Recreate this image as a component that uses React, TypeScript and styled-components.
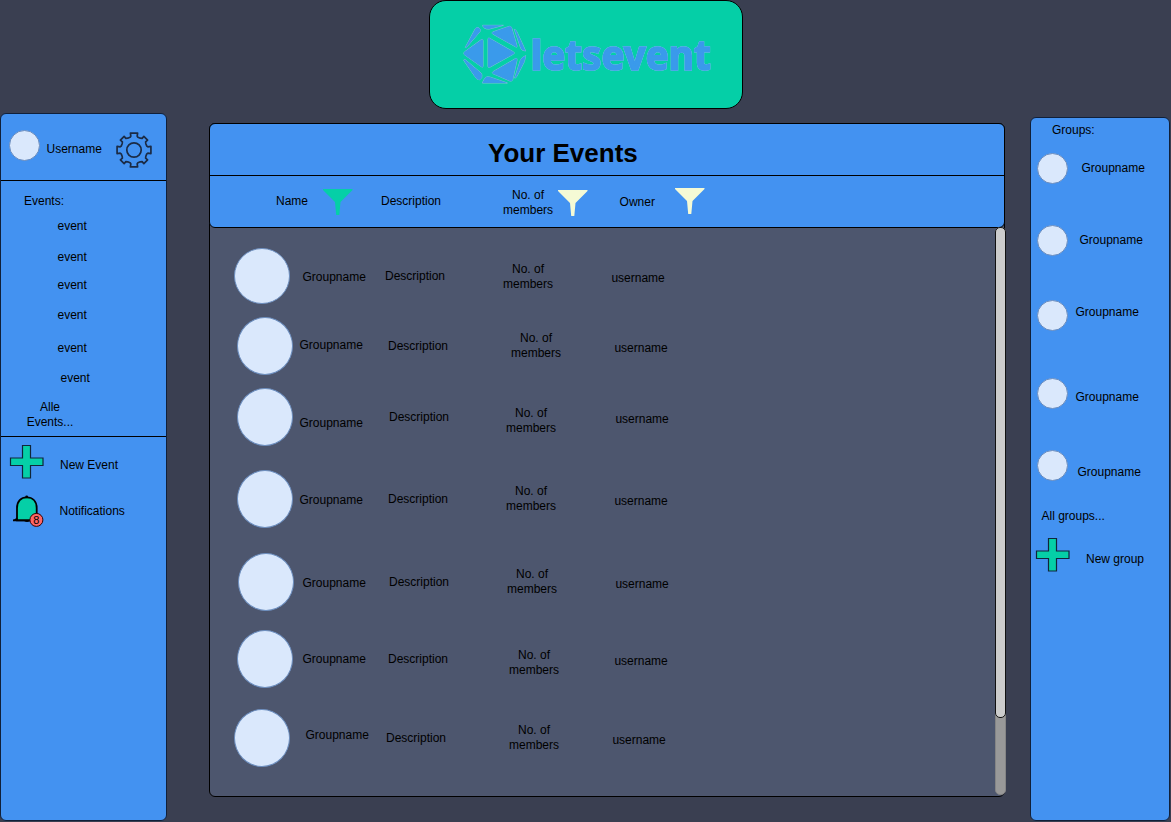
import React from "react";
import styled, { createGlobalStyle } from "styled-components";

const colors = {
  page: "#3a3f51",
  blue: "#4392f1",
  green: "#05cfa7",
  body: "#4d566e",
  avatar: "#dae8fc",
  avatarLine: "#6c8ebf",
  cream: "#f5fad5",
};

const GlobalStyle = createGlobalStyle`
  * { box-sizing: border-box; }
  body { margin: 0; background: ${colors.page}; overflow: hidden; }
`;

const Page = styled.div`
  display: flex;
  flex-direction: column;
  width: 1171px;
  height: 822px;
  background: ${colors.page};
  font: 12px/15px "Liberation Sans", Arial, sans-serif;
  color: #000;
`;

const Header = styled.header`
  display: flex;
  justify-content: center;
  height: 109px;
`;

const LogoCard = styled.div`
  width: 314px;
  height: 109px;
  background: ${colors.green};
  border: 1px solid #000;
  border-radius: 17px;
  svg { display: block; }
`;

const Main = styled.main`
  display: flex;
  align-items: flex-start;
  flex: 1;
`;

const SidePanel = styled.aside<{ $w: number; $h: number; $top: number }>`
  flex: none;
  width: ${(p) => p.$w}px;
  height: ${(p) => p.$h}px;
  margin-top: ${(p) => p.$top}px;
  background: ${colors.blue};
  border: 1px solid #10203a;
  border-radius: 6px;
`;

const Section = styled.section<{ $h?: number }>`
  display: flex;
  flex-direction: column;
  height: ${(p) => (p.$h ? `${p.$h}px` : "auto")};
  border-bottom: ${(p) => (p.$h ? "1px solid #000" : "none")};
`;

const Line = styled.div<{ $h: number }>`
  display: flex;
  align-items: flex-start;
  flex: none;
  height: ${(p) => p.$h}px;
`;

const Slot = styled.div<{ $x?: number; $y?: number }>`
  flex: none;
  margin: ${(p) => p.$y ?? 0}px 0 0 ${(p) => p.$x ?? 0}px;
  white-space: nowrap;
  svg { display: block; overflow: visible; }
`;

const Label = styled(Slot)`
  padding-top: 1px;
`;

const TwoLine = styled(Label)`
  width: 50px;
  text-align: center;
  white-space: normal;
`;

const Avatar = styled.div<{ $w: number; $h: number; $x?: number; $y?: number }>`
  flex: none;
  width: ${(p) => p.$w}px;
  height: ${(p) => p.$h}px;
  margin: ${(p) => p.$y ?? 0}px 0 0 ${(p) => p.$x ?? 0}px;
  border: 1px solid ${colors.avatarLine};
  border-radius: 50%;
  background: ${colors.avatar};
`;

const Center = styled.section`
  display: flex;
  flex: none;
  flex-direction: column;
  width: 796px;
  height: 674px;
  margin: 14px 25px 0 42px;
  background: ${colors.body};
  border: 1px solid #000;
  border-radius: 6px;
`;

const TableHead = styled.div`
  flex: none;
  height: 105px;
  margin: -1px;
  background: ${colors.blue};
  border: 1px solid #000;
  border-radius: 6px;
`;

const Title = styled.h1`
  height: 52px;
  margin: 0;
  padding: 14px 0 0 278px;
  border-bottom: 1px solid #000;
  font-size: 26px;
  line-height: 30px;
`;

const TableBody = styled.div`
  display: flex;
  flex: 1;
  min-height: 0;
`;

const Rows = styled.div`
  flex: 1;
  padding-top: 21px;
`;

const Row = styled.div<{ $h: number }>`
  display: grid;
  grid-template-columns: 89px 85px 115px 109px 1fr;
  align-items: start;
  height: ${(p) => p.$h}px;
`;

const Track = styled.div`
  flex: none;
  width: 11px;
  height: 568px;
  margin-right: -2px;
  background: #999;
  border: 1px solid #858585;
  border-radius: 5px;
`;

const Thumb = styled.div`
  width: 11px;
  height: 491px;
  margin: -1px;
  background: #ccc;
  border: 1px solid #111;
  border-radius: 5px;
`;

const Wordmark = styled.text`
  font: 700 122px "Noto Sans", sans-serif;
  fill: #3a9aeb;
  stroke: #3a9aeb;
  stroke-width: 5px;
  filter: drop-shadow(0 0 1.5px #b5dcec);
`;

const Logo = () => (
  <svg width="312" height="107" viewBox="30 3 936 321">
    <g fill="#3a9aeb" stroke="#7fc0d8" strokeWidth="3" strokeLinejoin="round" paintOrder="stroke">
      <path d="M133 156 L184 119 Q189 116 189 122 V198 Q189 204 184 200 L133 164 Q130 160 133 156Z" />
      <path d="M204 118 Q204 112 209 115 L281 156 Q285 159 281 162 L209 202 Q204 204 204 199Z" />
      <path d="M218 96 L268 79 Q273 78 275 83 L291 138 Q292 144 286 140 L218 102 Q214 99 218 96Z" />
      <path d="M219 215 L286 176 Q292 173 291 180 L278 239 Q276 245 270 243 L219 221 Q215 218 219 215Z" />
      <path d="M136 142 L166 86 Q170 80 177 84 Q184 88 180 95 L142 139 Q138 145 136 142Z" />
      <path d="M131 181 Q132 176 137 180 L183 219 Q187 223 185 233 Q180 243 172 238 Q168 235 165 230Z" />
      <path d="M188 76 H250 L208 87 Q190 88 188 76Z" />
      <path d="M187 249 Q193 235 199 231 Q204 229 212 232 L262 249Z" />
      <path d="M283 88 Q288 89 291 96 L317 153 L306 150 Q303 147 301 141Z" />
      <path d="M284 234 L301 181 Q304 172 317 167 L313 185 L291 228 Q288 235 284 234Z" />
    </g>
    <Wordmark x="332" y="209" textLength="540" lengthAdjust="spacingAndGlyphs">
      letsevent
    </Wordmark>
  </svg>
);

const gearPath = (() => {
  const pt = (r: number, deg: number) => {
    const a = (deg * Math.PI) / 180;
    return `${(18 + r * Math.sin(a)).toFixed(2)} ${(18 - r * Math.cos(a)).toFixed(2)}`;
  };
  let d = "";
  for (let k = 0; k < 8; k++) {
    const c = k * 45;
    const w = k % 2 ? 9 : 12;
    const r = k % 2 ? 16.8 : 17.3;
    d += `${k ? "L" : "M"}${pt(13.4, c - 17)} L${pt(14.2, c - w - 1)} L${pt(r, c - w)} L${pt(r, c + w)} L${pt(14.2, c + w + 1)} L${pt(13.4, c + 17)} L${pt(13.4, c + 28)} `;
  }
  return d + "Z";
})();

const Gear = () => (
  <svg width="36" height="36" fill="none" stroke="#1b2b45" strokeWidth="1.7" strokeLinejoin="round">
    <path d={gearPath} />
    <circle cx="18" cy="18" r="7.2" />
  </svg>
);

const Plus = () => (
  <svg width="34" height="34">
    <path
      d="M12.5 .5h8v12.5h12.5v7.5h-12.5v12.5h-8v-12.5h-12v-7.5h12z"
      fill={colors.green}
      stroke="#10263a"
      strokeWidth="1.2"
    />
  </svg>
);

const Funnel = ({ color }: { color: string }) => (
  <svg width="30" height="27">
    <path d="M0 0H29.5V1L17.5 13L16.3 26H13.2L12 13L0 1Z" fill={color} />
  </svg>
);

const Bell = () => (
  <svg width="32" height="32">
    <path d="M10 25 Q14 29 18 25Z" fill="#000" />
    <path
      d="M4 25.3 V13 C4 6 8 2.3 13.7 2.3 C19.5 2.3 23.7 6 23.7 13 V25.3Z"
      fill={colors.green}
      stroke="#000"
      strokeWidth="1.8"
    />
    <path d="M0 26.2 V24.6 Q2.5 24.6 3.5 22.5 L5 24.4 H26 V26.2Z" />
    <circle cx="13.7" cy="1.8" r="1.4" />
    <circle cx="23.4" cy="24.9" r="6.5" fill="#ff6666" stroke="#300" />
    <text x="23.2" y="28.6" fontSize="11" textAnchor="middle" fontFamily="Liberation Sans, sans-serif">
      8
    </text>
  </svg>
);

const events: [number, number][] = [
  [56, 31],
  [56, 28],
  [56, 30],
  [56, 33],
  [56, 30],
  [59, 29],
];

type Pos = [number, number];
interface EventRow {
  h: number;
  avatar: Pos;
  size: number;
  name: Pos;
  desc: Pos;
  members: Pos;
  owner: Pos;
}

const rows: EventRow[] = [
  { h: 69, avatar: [24, 0], size: 56, name: [3.5, 21], desc: [1, 20], members: [4, 13], owner: [3.4, 22] },
  { h: 71, avatar: [27, 0], size: 58, name: [0.5, 20], desc: [4, 21], members: [12, 13], owner: [6.4, 23] },
  { h: 82, avatar: [27, 0], size: 58, name: [0.5, 27], desc: [5, 21], members: [7, 17], owner: [7.4, 23] },
  { h: 83, avatar: [27, 0], size: 58, name: [0.5, 22], desc: [4, 21], members: [7, 13], owner: [6.4, 23] },
  { h: 77, avatar: [28, 0], size: 58, name: [3.5, 22], desc: [5, 21], members: [8, 13], owner: [7.4, 23] },
  { h: 79, avatar: [27, 0], size: 58, name: [3.5, 21], desc: [4, 21], members: [10, 17], owner: [6.4, 23] },
  { h: 60, avatar: [24.4, 0], size: 58, name: [6.5, 18], desc: [2, 21], members: [10, 13], owner: [4.4, 23] },
];

const groups = [
  { h: 72, x: 13.5, y: 7 },
  { h: 75, x: 11.5, y: 7 },
  { h: 78, x: 7.5, y: 4 },
  { h: 72, x: 7.5, y: 11 },
  { h: 58, x: 9.5, y: 14 },
];

export default function App() {
  return (
    <Page>
      <GlobalStyle />
      <Header>
        <LogoCard>
          <Logo />
        </LogoCard>
      </Header>
      <Main>
        <SidePanel $w={167} $h={708} $top={4}>
          <Section $h={67}>
            <Line $h={66}>
              <Avatar $w={31} $h={31} $x={8} $y={16} />
              <Label $x={6.5} $y={27}>Username</Label>
              <Slot $x={14.5} $y={18}><Gear /></Slot>
            </Line>
          </Section>
          <Section $h={256}>
            <Line $h={37}>
              <Label $x={23} $y={12}>Events:</Label>
            </Line>
            {events.map(([x, h], i) => (
              <Line key={i} $h={h}>
                <Label $x={x + 0.5}>event</Label>
              </Line>
            ))}
            <Line $h={30}>
              <TwoLine $x={24}>Alle Events...</TwoLine>
            </Line>
          </Section>
          <Section>
            <Line $h={58}>
              <Slot $x={9} $y={8}><Plus /></Slot>
              <Label $x={16} $y={20}>New Event</Label>
            </Line>
            <Line $h={40}>
              <Slot $x={12} $y={0}><Bell /></Slot>
              <Label $x={14.5} $y={8}>Notifications</Label>
            </Line>
          </Section>
        </SidePanel>

        <Center>
          <TableHead>
            <Title>Your Events</Title>
            <Line $h={50}>
              <Label $x={66} $y={17}>Name</Label>
              <Slot $x={14.5} $y={13}><Funnel color={colors.green} /></Slot>
              <Label $x={28.5} $y={17}>Description</Label>
              <TwoLine $x={62} $y={11}>No. of members</TwoLine>
              <Slot $x={5} $y={13.5}><Funnel color={colors.cream} /></Slot>
              <Label $x={31.5} $y={18}>Owner</Label>
              <Slot $x={20} $y={11.5}><Funnel color={colors.cream} /></Slot>
            </Line>
          </TableHead>
          <TableBody>
            <Rows>
              {rows.map((r, i) => (
                <Row key={i} $h={r.h}>
                  <Avatar $w={56} $h={r.size} $x={r.avatar[0]} $y={r.avatar[1]} />
                  <Label $x={r.name[0]} $y={r.name[1]}>Groupname</Label>
                  <Label $x={r.desc[0]} $y={r.desc[1]}>Description</Label>
                  <TwoLine $x={r.members[0]} $y={r.members[1]}>No. of members</TwoLine>
                  <Label $x={r.owner[0]} $y={r.owner[1]}>username</Label>
                </Row>
              ))}
            </Rows>
            <Track>
              <Thumb />
            </Track>
          </TableBody>
        </Center>

        <SidePanel $w={140} $h={704} $top={8}>
          <Line $h={35}>
            <Label $x={21} $y={4}>Groups:</Label>
          </Line>
          {groups.map((g, i) => (
            <Line key={i} $h={g.h}>
              <Avatar $w={31} $h={31} $x={6} />
              <Label $x={g.x} $y={g.y}>Groupname</Label>
            </Line>
          ))}
          <Line $h={30}>
            <Label $x={10.5}>All groups...</Label>
          </Line>
          <Line $h={40}>
            <Slot $x={5}><Plus /></Slot>
            <Label $x={16} $y={13}>New group</Label>
          </Line>
        </SidePanel>
      </Main>
    </Page>
  );
}
